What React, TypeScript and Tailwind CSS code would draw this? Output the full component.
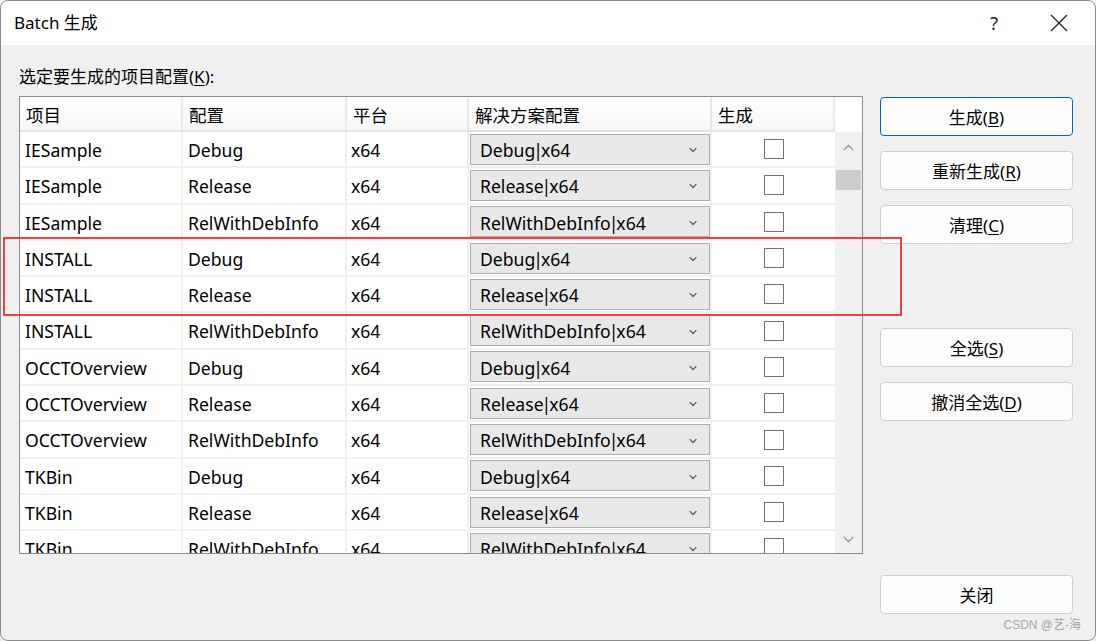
import { ChevronDown, ChevronUp } from "lucide-react";

const rows: [string, string][] = [
  ["IESample", "Debug"],
  ["IESample", "Release"],
  ["IESample", "RelWithDebInfo"],
  ["INSTALL", "Debug"],
  ["INSTALL", "Release"],
  ["INSTALL", "RelWithDebInfo"],
  ["OCCTOverview", "Debug"],
  ["OCCTOverview", "Release"],
  ["OCCTOverview", "RelWithDebInfo"],
  ["TKBin", "Debug"],
  ["TKBin", "Release"],
  ["TKBin", "RelWithDebInfo"],
];

const font = {
  fontFamily: '"Noto Sans", "Noto Sans CJK SC", sans-serif',
};

function DlgButton({
  label,
  hot,
  primary,
}: {
  label: string;
  hot?: string;
  primary?: boolean;
}) {
  return (
    <button
      className={
        "w-[193px] h-[39px] rounded-[4px] bg-[#fdfdfd] text-[17px] text-black flex items-center justify-center pt-[2px] border " +
        (primary ? "border-[#0067c0]" : "border-[#d0d0d0]")
      }
    >
      {label}
      {hot && (
        <span>
          (<span className="underline underline-offset-2">{hot}</span>)
        </span>
      )}
    </button>
  );
}

function Row({ name, cfg }: { name: string; cfg: string }) {
  return (
    <div className="flex h-[36.3px] shrink-0 border-b-2 border-[#f0f0f0] bg-white text-[17.6px] text-black">
      <div className="w-[163px] border-r-2 border-[#f0f0f0] pl-[5px] pt-[2px] flex items-center">{name}</div>
      <div className="w-[164px] border-r-2 border-[#f0f0f0] pl-[5px] pt-[2px] flex items-center">{cfg}</div>
      <div className="w-[122px] border-r-2 border-[#f0f0f0] pl-[4px] pt-[2px] flex items-center">x64</div>
      <div className="w-[243px] border-r-2 border-[#f0f0f0] pl-[1px] flex items-center">
        <div className="w-[240px] h-[31px] border border-[#adadad] bg-[#e8e8e8] flex items-center pl-[9px] pr-[10px] pt-[2px] justify-between">
          <span>
            {cfg}
            <span className="-mx-[2px]">|</span>x64
          </span>
          <ChevronDown size={12} strokeWidth={2.5} className="text-[#606060]" />
        </div>
      </div>
      <div className="w-[123px] flex items-center justify-center">
        <div className="w-[20px] h-[20px] border-[1.5px] border-[#707070] bg-white" />
      </div>
    </div>
  );
}

export default function App() {
  return (
    <div className="w-[1096px] h-[641px] relative overflow-hidden bg-[#f0f0f0]" style={font}>
      <div className="w-full h-full flex flex-col border border-[#8a8a8a] rounded-[8px] overflow-hidden bg-[#f0f0f0]">
        {/* Title bar */}
        <div className="h-[44px] bg-white flex items-center shrink-0">
          <span className="ml-[13px] text-[17px] text-black">Batch 生成</span>
          <span className="ml-auto mr-[52px] text-[18px] text-[#222]">?</span>
          <svg width="18" height="18" viewBox="0 0 18 18" className="mr-[27px]">
            <path d="M1 1 L17 17 M17 1 L1 17" stroke="#222" strokeWidth="1.3" />
          </svg>
        </div>

        {/* Body */}
        <div className="flex-1 flex pl-[18px] pt-[19px]">
          <div className="flex flex-col">
            <div className="text-[17px] text-black h-[24px] flex items-center pt-[2px]">
              选定要生成的项目配置(<span className="underline underline-offset-2">K</span>):
            </div>
            <div className="mt-[8px] w-[844px] h-[458px] border border-[#8c8c94] flex">
              <div className="w-[815px] flex flex-col overflow-hidden">
                <div className="flex h-[35px] shrink-0 border-b-2 border-[#e3e3e3] bg-white text-[17.5px] text-black">
                  {[
                    ["项目", "w-[163px]"],
                    ["配置", "w-[164px]"],
                    ["平台", "w-[122px]"],
                    ["解决方案配置", "w-[243px]"],
                    ["生成", "w-[123px]"],
                  ].map(([t, w]) => (
                    <div
                      key={t}
                      className={w + " border-r-2 border-[#e8e8e8] pl-[6px] pt-[4px] flex items-center bg-gradient-to-b from-white to-[#f7f7f7]"}
                    >
                      {t}
                    </div>
                  ))}
                </div>
                {rows.map(([n, c], i) => (
                  <Row key={i} name={n} cfg={c} />
                ))}
              </div>
              {/* Scrollbar */}
              <div className="flex-1 bg-[#f0f0f0] flex flex-col items-center">
                <div className="h-[35px] w-full bg-white" />
                <ChevronUp size={17} strokeWidth={2} className="text-[#a0a0a0] mt-[7px]" />
                <div className="mt-[14px] w-[25px] h-[20px] bg-[#cdcdcd]" />
                <div className="flex-1" />
                <ChevronDown size={17} strokeWidth={2} className="text-[#a0a0a0] mb-[5px]" />
              </div>
            </div>
          </div>

          {/* Buttons */}
          <div className="ml-[17px] mt-[33px] flex flex-col pb-[26px]">
            <div className="flex flex-col gap-[15px]">
              <DlgButton label="生成" hot="B" primary />
              <DlgButton label="重新生成" hot="R" />
              <DlgButton label="清理" hot="C" />
            </div>
            <div className="mt-[84px] flex flex-col gap-[15px]">
              <DlgButton label="全选" hot="S" />
              <DlgButton label="撤消全选" hot="D" />
            </div>
            <div className="mt-auto">
              <DlgButton label="关闭" />
            </div>
          </div>
        </div>
      </div>

      {/* Red highlight overlay */}
      <div className="absolute left-[3px] top-[237px] w-[899px] h-[79px] border-2 border-[#f04040]" />

      {/* Watermark */}
      <div
        className="absolute right-[15px] bottom-[7px] text-[12px] text-[#a8a8a8]"
        style={{ fontFamily: '"Liberation Sans", "Noto Sans CJK SC", sans-serif' }}
      >
        CSDN @艺-海
      </div>
    </div>
  );
}
